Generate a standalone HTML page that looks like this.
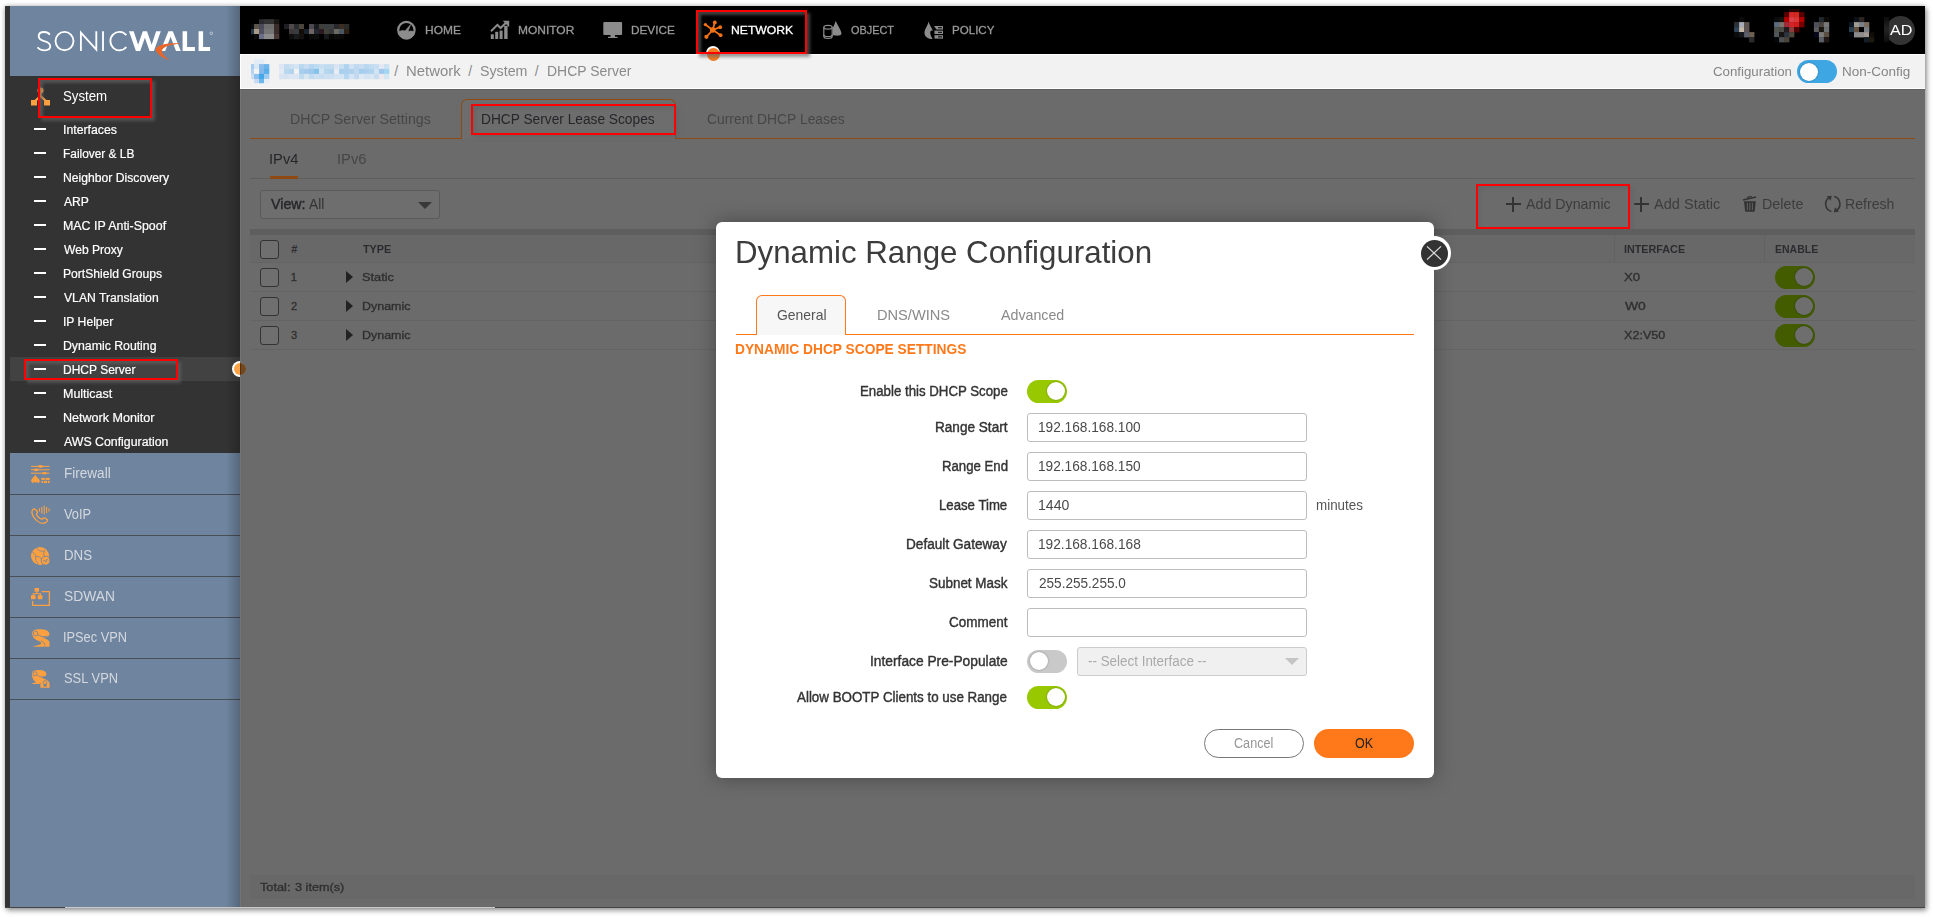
<!DOCTYPE html>
<html>
<head>
<meta charset="utf-8">
<title>DHCP Server</title>
<style>
*{box-sizing:border-box;margin:0;padding:0}
html,body{width:1934px;height:917px;overflow:hidden;background:#fff}
body{font-family:"Liberation Sans",sans-serif;position:relative}
.abs{position:absolute}
.t{position:absolute;white-space:nowrap;line-height:1;transform-origin:0 0}
.b{font-weight:bold}
#shot{position:absolute;left:5px;top:6px;width:1920px;height:902px;box-shadow:0 0 5px rgba(0,0,0,.3),2px 3px 5px rgba(0,0,0,.3);background:#6b6b6b}
/* everything below uses page coordinates */
#strip{left:5px;top:6px;width:5px;height:902px;background:#333}
#logo{left:10px;top:6px;width:230px;height:70px;background:#6e849f}
#menu{left:10px;top:76px;width:230px;height:377px;background:#333}
#lower{left:10px;top:453px;width:230px;height:455px;background:#6e849f}
#sideshadow{left:226px;top:6px;width:14px;height:902px;background:linear-gradient(to right,rgba(0,0,0,0),rgba(0,0,0,.22))}
#topbar{left:240px;top:6px;width:1685px;height:48px;background:#000}
#crumb{left:240px;top:54px;width:1685px;height:35px;background:#f2f2f2;border-top:1px solid #fff;border-bottom:1px solid #fff;border-left:1px solid #fff}
#content{left:240px;top:89px;width:1685px;height:819px;background:#6b6b6b;border-top:1px solid #606060;border-left:1px solid #747474}
#panel{left:250px;top:90px;width:1665px;height:809px;background:#6b6b6b}
.redbox{position:absolute;border:2px solid #f00;box-shadow:3px 3px 3px rgba(100,100,100,.65),inset 3px 3px 3px rgba(100,100,100,.65)}
#modal{left:716px;top:222px;width:718px;height:556px;background:#fff;border-radius:6px;box-shadow:0 0 20px rgba(0,0,0,.34)}
.mi{font-size:12px;color:#fff}
.li{font-size:14.5px;color:#dfe3ea}
.nv{font-size:12px}
.bc{font-size:15px;color:#8a8a8a}
.cf{font-size:13.5px;color:#858585}
.tb{font-size:14px}
.tl{font-size:14.5px;color:#3c3c3c}
.th{font-size:11px;font-weight:bold;color:#2b2b2b}
.td{font-size:11px;color:#333}
.mt{font-size:14.5px}
.lb{font-size:13.5px;font-weight:bold;color:#3a3a3a}
.inp{left:1027px;width:280px;height:29px;border:1px solid #bdbdbd;border-radius:3px;background:#fff}
.iv{font-size:14px;color:#555}
</style>
</head>
<body>
<div id="shot"></div>
<div id="strip" class="abs"></div>
<div id="logo" class="abs"></div>
<div id="menu" class="abs"></div>
<div id="lower" class="abs"></div>
<div id="topbar" class="abs"></div>
<div id="crumb" class="abs"></div>
<div id="content" class="abs"></div>
<div id="panel" class="abs"></div>
<!--SIDEBAR-->
<svg class="abs" style="left:10px;top:6px" width="230" height="70" viewBox="10 6 230 70">
<g fill="none" stroke="#fff" stroke-width="1.85">
<path d="M49.8 34.8 C48.6 32.8 46.5 32 44 32 C40.8 32 38.7 33.7 38.7 36.3 C38.7 39.2 41 40.2 44.2 41.1 C47.8 42.1 50.3 43.3 50.3 46.3 C50.3 48.9 48 50.3 44.6 50.3 C41.6 50.3 39 49.2 37.6 47.2"/>
<ellipse cx="64.5" cy="41.1" rx="9" ry="9.2"/>
<path d="M80.9 51 V32.6 L96.3 49.6 V31.2"/>
<path d="M103 31.2 V51"/>
<path d="M126.3 35.2 A9 9.2 0 1 0 126.3 47"/>
</g>
<g fill="#fff">
<path d="M129 31.2 h4.7 l4.4 13.6 l4.7-13.6 h4.2 l4.7 13.6 l4.4-13.6 h4.7 l-6.9 19.8 h-4.3 l-4.7-13.2 l-4.7 13.2 h-4.3z"/>
<path d="M168.4 31.2 h4.4 l8 19.8 h-4.8 l-5.4-14.2 l-5.4 14.2 h-4.8z"/>
<path d="M182.6 31.2 h4.5 v15.8 h7.8 v4 h-12.3z"/>
<path d="M198.6 31.2 h4.5 v15.8 h7.0 v4 h-11.5z"/>
<circle cx="211.3" cy="33.3" r="1.3" fill="none" stroke="#fff" stroke-width=".5"/>
</g>
<path d="M180.8 43.6 C170 42.6 158.5 44.2 155.8 48.6 C154.8 52.5 161.5 58 169.5 60.2 C164.5 56.5 160.5 52.5 162.5 49.3 C164.5 46.3 172 44.6 180.8 43.6z" fill="#e8662a"/>
</svg>
<div class="abs" style="left:10px;top:357px;width:230px;height:24px;background:#424242"></div>
<svg class="abs" style="left:30px;top:86px" width="22" height="22" viewBox="0 0 22 22"><g fill="#ffa040" stroke="none"><circle cx="10.5" cy="4.5" r="3"/><rect x="1" y="14" width="6" height="5.5"/><rect x="14" y="14" width="6" height="5.5"/></g><path d="M10.5 5 V10 L4 16 M10.5 10 L17 16" stroke="#ffa040" stroke-width="2.2" fill="none"/></svg>
<div class="abs" style="left:34px;top:128px;width:12px;height:2px;background:#fff"></div>
<div class="abs" style="left:34px;top:152px;width:12px;height:2px;background:#fff"></div>
<div class="abs" style="left:34px;top:176px;width:12px;height:2px;background:#fff"></div>
<div class="abs" style="left:34px;top:200px;width:12px;height:2px;background:#fff"></div>
<div class="abs" style="left:34px;top:224px;width:12px;height:2px;background:#fff"></div>
<div class="abs" style="left:34px;top:248px;width:12px;height:2px;background:#fff"></div>
<div class="abs" style="left:34px;top:272px;width:12px;height:2px;background:#fff"></div>
<div class="abs" style="left:34px;top:296px;width:12px;height:2px;background:#fff"></div>
<div class="abs" style="left:34px;top:320px;width:12px;height:2px;background:#fff"></div>
<div class="abs" style="left:34px;top:344px;width:12px;height:2px;background:#fff"></div>
<div class="abs" style="left:34px;top:368px;width:12px;height:2px;background:#fff"></div>
<div class="abs" style="left:34px;top:392px;width:12px;height:2px;background:#fff"></div>
<div class="abs" style="left:34px;top:416px;width:12px;height:2px;background:#fff"></div>
<div class="abs" style="left:34px;top:440px;width:12px;height:2px;background:#fff"></div>
<div class="abs" style="left:10px;top:494px;width:230px;height:1.3px;background:#4a4e56"></div>
<!--ICON0-->
<div class="abs" style="left:10px;top:535px;width:230px;height:1.3px;background:#4a4e56"></div>
<!--ICON1-->
<div class="abs" style="left:10px;top:576px;width:230px;height:1.3px;background:#4a4e56"></div>
<!--ICON2-->
<div class="abs" style="left:10px;top:617px;width:230px;height:1.3px;background:#4a4e56"></div>
<!--ICON3-->
<div class="abs" style="left:10px;top:658px;width:230px;height:1.3px;background:#4a4e56"></div>
<!--ICON4-->
<div class="abs" style="left:10px;top:699px;width:230px;height:1.3px;background:#4a4e56"></div>
<!--ICON5-->
<div id="sideshadow" class="abs"></div>
<svg class="abs" style="left:28px;top:460px" width="26" height="232" viewBox="28 460 26 232">
<!-- firewall -->
<g stroke="#ffa040" stroke-width="1" fill="none"><path d="M31 466.4 H49.6 M31 469.8 H49.6 M31 473.2 H49.6"/></g>
<g fill="#ffa040"><ellipse cx="40.5" cy="466.4" rx="2.4" ry="1.3"/><ellipse cx="36.2" cy="469.8" rx="2.4" ry="1.3"/><ellipse cx="44.5" cy="473.2" rx="2.4" ry="1.3"/>
<path d="M35.3 474.6 C36 477 39.6 478.6 39.8 481 C39.9 482.4 38.6 483 37.8 483 L37 481.4 L35.6 483 L34.2 481.4 L33.2 483 C32 483 31 482 31.2 480.6 C31.5 478.4 34.5 477 35.3 474.6z"/>
<rect x="41.4" y="477.8" width="3.3" height="2.2"/><rect x="45.6" y="477.8" width="4" height="2.2"/><rect x="41.4" y="480.8" width="1.6" height="2.2"/><rect x="43.8" y="480.8" width="3.4" height="2.2"/><rect x="48" y="480.8" width="1.6" height="2.2"/></g>
<!-- voip -->
<g stroke="#ffa040" fill="none" stroke-width="1.3" stroke-linejoin="round"><path d="M33 509.6 C31.2 511 31.6 514.6 34.6 518.4 C37.8 522.4 42.2 524.2 45.4 522.6 C47.4 521.6 48 520.4 47.2 519.6 L44.8 518 C44 517.6 43.2 518 42.6 518.8 C41.8 519.6 40.8 519.4 38.8 517.6 C36.8 515.8 36 514.4 36.8 513.4 C37.6 512.6 37.6 511.8 36.8 511 L35.2 509.4 C34.6 508.8 33.8 509 33 509.6z"/></g>
<g stroke="#ffa040" stroke-width="1.1"><path d="M39.4 508.2 v3.4 M41.8 507 v6.4 M44.2 505.6 v8.6 M46.6 507 v6 M49 508.6 v2.8"/></g>
<!-- dns -->
<circle cx="40" cy="556" r="9" fill="#ffa040"/>
<g stroke="#6e849f" stroke-width=".8" fill="none"><path d="M36.5 548 C38.5 551 41.5 552 45 550.5 M32.2 552 C35 553.5 36.5 556 35.5 560.5 M35.5 556.5 C38.5 556 41 557.5 42 560 M44.5 551 C43 553.5 43.5 555.5 45.5 556.5 M36 561 C37.5 562 38 563.5 37.5 564.8"/></g>
<circle cx="45.6" cy="560.6" r="4.4" fill="#ffa040" stroke="#6e849f" stroke-width=".9"/>
<path d="M43 561 l1.4-1 l1.2 2.2 l1.4-3 l1.2 1.4" fill="none" stroke="#6e849f" stroke-width=".8"/>
<!-- sdwan -->
<g fill="#ffa040"><rect x="34.6" y="588" width="4.4" height="3.6"/><rect x="31" y="595.2" width="4.6" height="4"/><rect x="37.8" y="595.2" width="4.6" height="4"/><rect x="36.3" y="591" width="1" height="3"/><rect x="32.8" y="593.2" width="8" height="1"/><rect x="32.8" y="593.2" width="1" height="2.4"/><rect x="39.8" y="593.2" width="1" height="2.4"/></g>
<path d="M41.6 591.6 H49.4 V605.4 H32.6 V601" fill="none" stroke="#ffa040" stroke-width="1.3"/>
<!-- ipsec -->
<path d="M32.2 633 C32.4 630.6 35 629.2 39.5 629.2 C45 629.2 49.2 630.6 49.4 634 C49.5 636.6 46 637.6 41 637.8 C44.8 638.2 49.6 639.6 49.6 643 L49.4 646.8 H32.2 C34.5 646 38.4 645.4 40.8 644 C41.8 643.2 40.8 642 38.6 641 C34.4 639.4 32 636.4 32.2 633z" fill="#ffa040"/>
<g fill="none" stroke="#6e849f" stroke-width=".8"><circle cx="35.6" cy="633.6" r="2.3"/><path d="M38 635 C40.5 636.5 44 637 47.5 636.2 M40.6 641 C43 641.6 45.4 642.8 44.8 646.4"/></g>
<!-- ssl vpn -->
<path d="M32 673.2 C32.2 671 34.6 670 38.6 670 C43 670 46.2 671.2 46.4 674 C46.5 676 44 677.2 40.6 677.6 C42.6 678 44.6 678.8 45.8 680 L38.4 684 C37.8 683 36.8 682.4 35.6 681.8 C33 680.4 31.8 676.4 32 673.2z" fill="#ffa040"/>
<path d="M31.2 683.4 C34 683 37 682.2 38.6 680.8 L39.8 683.8 C37.4 684.2 33.6 684.2 31.2 683.4z" fill="#ffa040"/>
<path d="M40.4 687.8 V682.4 C41.6 680.8 43.4 679.6 45.6 679.6 C48 680.2 49.4 682 49.6 684 V687.8z" fill="#ffa040"/>
<g fill="none" stroke="#6e849f" stroke-width=".8"><circle cx="35" cy="673.8" r="2.1"/><path d="M37.4 675.4 C39.6 676.8 42.6 677.4 45 676.6"/><circle cx="45" cy="682.6" r="1.9"/></g>
<path d="M43.8 684 h2.6 l.5 2.6 h-3.6z" fill="#6e849f"/>
</svg>
<div class="redbox" style="left:38px;top:78px;width:114px;height:39.5px"></div>
<div class="redbox" style="left:24px;top:358.5px;width:153.5px;height:21.5px"></div>
<div class="abs" style="left:232px;top:360.7px;width:8px;height:16.6px;border-radius:8.3px 0 0 8.3px;background:#fff"></div>
<div class="abs" style="left:234px;top:362.9px;width:12.2px;height:12.2px;border-radius:6.1px;background:#ffa347"></div>
<div class="abs" style="left:240px;top:362.9px;width:6.2px;height:12.2px;background:rgba(0,0,0,.56);border-radius:0 6.1px 6.1px 0"></div><div class="abs" style="left:239.6px;top:362.9px;width:.8px;height:12.2px;background:rgba(0,0,0,.3)"></div>
<!--TOPNAV-->
<svg class="abs" style="left:240px;top:6px;filter:blur(.5px)" width="1685" height="82" viewBox="240 6 1685 82"><rect x="259.0" y="19.2" width="5.3" height="5.1" fill="#2a2a30"/><rect x="264.0" y="19.2" width="10.3" height="5.1" fill="#333"/><rect x="274.0" y="19.2" width="5.3" height="5.1" fill="#1a1614"/><rect x="251.0" y="24.0" width="3.3" height="5.3" fill="#05080c"/><rect x="254.0" y="24.0" width="5.3" height="5.3" fill="#5a544a"/><rect x="259.0" y="24.0" width="5.3" height="5.3" fill="#4a4a58"/><rect x="264.0" y="24.0" width="10.3" height="5.3" fill="#6e6e6e"/><rect x="274.0" y="24.0" width="5.3" height="5.3" fill="#3a2c2a"/><rect x="251.0" y="29.0" width="3.3" height="5.3" fill="#25384a"/><rect x="254.0" y="29.0" width="5.3" height="5.3" fill="#a89c88"/><rect x="259.0" y="29.0" width="5.3" height="5.3" fill="#505060"/><rect x="264.0" y="29.0" width="10.3" height="5.3" fill="#757575"/><rect x="274.0" y="29.0" width="5.3" height="5.3" fill="#3a2c2a"/><rect x="254.0" y="34.0" width="5.3" height="5.1" fill="#0c0c0a"/><rect x="259.0" y="34.0" width="5.3" height="5.1" fill="#6a6e88"/><rect x="264.0" y="34.0" width="10.3" height="5.1" fill="#8c8c8c"/><rect x="274.0" y="34.0" width="5.3" height="5.1" fill="#4a3632"/><rect x="284.0" y="24.0" width="5.3" height="5.3" fill="#1c1e22"/><rect x="289.0" y="24.0" width="5.3" height="5.3" fill="#4e4a4c"/><rect x="294.0" y="24.0" width="5.3" height="5.3" fill="#2a2c2e"/><rect x="299.0" y="24.0" width="5.3" height="5.3" fill="#4a463e"/><rect x="304.0" y="24.0" width="5.3" height="5.3" fill="#000"/><rect x="309.0" y="24.0" width="5.3" height="5.3" fill="#4e4850"/><rect x="314.0" y="24.0" width="5.3" height="5.3" fill="#181c1e"/><rect x="319.0" y="24.0" width="5.3" height="5.3" fill="#403e3a"/><rect x="324.0" y="24.0" width="5.3" height="5.3" fill="#3a4042"/><rect x="329.0" y="24.0" width="5.3" height="5.3" fill="#3c3e40"/><rect x="334.0" y="24.0" width="5.3" height="5.3" fill="#28282c"/><rect x="339.0" y="24.0" width="5.3" height="5.3" fill="#3a2e22"/><rect x="344.0" y="24.0" width="5.3" height="5.3" fill="#2a2a28"/><rect x="284.0" y="29.0" width="5.3" height="5.3" fill="#000"/><rect x="289.0" y="29.0" width="5.3" height="5.3" fill="#3e3638"/><rect x="294.0" y="29.0" width="5.3" height="5.3" fill="#363c40"/><rect x="299.0" y="29.0" width="5.3" height="5.3" fill="#140e08"/><rect x="304.0" y="29.0" width="5.3" height="5.3" fill="#18222c"/><rect x="309.0" y="29.0" width="5.3" height="5.3" fill="#6e6462"/><rect x="314.0" y="29.0" width="5.3" height="5.3" fill="#222630"/><rect x="319.0" y="29.0" width="5.3" height="5.3" fill="#2a1a20"/><rect x="324.0" y="29.0" width="5.3" height="5.3" fill="#40423a"/><rect x="329.0" y="29.0" width="5.3" height="5.3" fill="#38383a"/><rect x="334.0" y="29.0" width="5.3" height="5.3" fill="#6a6a60"/><rect x="339.0" y="29.0" width="5.3" height="5.3" fill="#4a5664"/><rect x="344.0" y="29.0" width="5.3" height="5.3" fill="#2c2014"/><rect x="284.0" y="34.0" width="5.3" height="5.3" fill="#000"/><rect x="289.0" y="34.0" width="5.3" height="5.3" fill="#0e0e0e"/><rect x="294.0" y="34.0" width="5.3" height="5.3" fill="#181a1c"/><rect x="299.0" y="34.0" width="5.3" height="5.3" fill="#14120e"/><rect x="304.0" y="34.0" width="5.3" height="5.3" fill="#000"/><rect x="309.0" y="34.0" width="5.3" height="5.3" fill="#0a0a0a"/><rect x="314.0" y="34.0" width="5.3" height="5.3" fill="#0c0c0c"/><rect x="319.0" y="34.0" width="5.3" height="5.3" fill="#000"/><rect x="324.0" y="34.0" width="5.3" height="5.3" fill="#16181a"/><rect x="329.0" y="34.0" width="5.3" height="5.3" fill="#080604"/><rect x="334.0" y="34.0" width="5.3" height="5.3" fill="#0c0c0c"/><rect x="339.0" y="34.0" width="5.3" height="5.3" fill="#0a0a0a"/><rect x="344.0" y="34.0" width="5.3" height="5.3" fill="#000"/><rect x="254.0" y="59.3" width="5.3" height="5.1" fill="#e2ecf6"/><rect x="259.0" y="59.3" width="5.3" height="5.1" fill="#e2ecf6"/><rect x="251.0" y="64.1" width="3.3" height="5.1" fill="#a8ccf0"/><rect x="254.0" y="64.1" width="5.3" height="5.1" fill="#d8e8f4"/><rect x="259.0" y="64.1" width="5.3" height="5.1" fill="#8cbcec"/><rect x="264.0" y="64.1" width="5.3" height="5.1" fill="#6cb4ec"/><rect x="251.0" y="68.9" width="3.3" height="5.3" fill="#b4d4f0"/><rect x="254.0" y="68.9" width="5.3" height="5.3" fill="#f4f4f4"/><rect x="259.0" y="68.9" width="5.3" height="5.3" fill="#86b8ea"/><rect x="264.0" y="68.9" width="5.3" height="5.3" fill="#58aee8"/><rect x="251.0" y="73.9" width="3.3" height="5.3" fill="#ccdcf2"/><rect x="254.0" y="73.9" width="5.3" height="5.3" fill="#8cc0ee"/><rect x="259.0" y="73.9" width="5.3" height="5.3" fill="#44a8e8"/><rect x="264.0" y="73.9" width="5.3" height="5.3" fill="#9ccaf0"/><rect x="254.0" y="78.9" width="5.3" height="4.3" fill="#c8daf2"/><rect x="259.0" y="78.9" width="5.3" height="4.3" fill="#6cb8ea"/><rect x="264.0" y="78.9" width="5.3" height="4.3" fill="#e8eef6"/><rect x="279.0" y="64.1" width="5.3" height="5.1" fill="#dce6f4"/><rect x="284.0" y="64.1" width="5.3" height="5.1" fill="#c4dcf0"/><rect x="289.0" y="64.1" width="5.3" height="5.1" fill="#cce0f2"/><rect x="294.0" y="64.1" width="5.3" height="5.1" fill="#d4e4f2"/><rect x="299.0" y="64.1" width="5.3" height="5.1" fill="#b8d8f0"/><rect x="304.0" y="64.1" width="5.3" height="5.1" fill="#c8dcf2"/><rect x="309.0" y="64.1" width="5.3" height="5.1" fill="#b4d6f0"/><rect x="314.0" y="64.1" width="5.3" height="5.1" fill="#bcdaf0"/><rect x="319.0" y="64.1" width="5.3" height="5.1" fill="#c8dff2"/><rect x="324.0" y="64.1" width="5.3" height="5.1" fill="#c0dcf0"/><rect x="329.0" y="64.1" width="5.3" height="5.1" fill="#c4dcf0"/><rect x="334.0" y="64.1" width="5.3" height="5.1" fill="#dce4f4"/><rect x="339.0" y="64.1" width="5.3" height="5.1" fill="#c8e0f2"/><rect x="344.0" y="64.1" width="5.3" height="5.1" fill="#b0d4f0"/><rect x="349.0" y="64.1" width="5.3" height="5.1" fill="#d0e2f4"/><rect x="354.0" y="64.1" width="5.3" height="5.1" fill="#c0d8f0"/><rect x="359.0" y="64.1" width="5.3" height="5.1" fill="#c8dcf2"/><rect x="364.0" y="64.1" width="5.3" height="5.1" fill="#b8d8f0"/><rect x="369.0" y="64.1" width="5.3" height="5.1" fill="#c0dcf0"/><rect x="374.0" y="64.1" width="5.3" height="5.1" fill="#c8def2"/><rect x="379.0" y="64.1" width="5.3" height="5.1" fill="#e4e8f4"/><rect x="384.0" y="64.1" width="5.3" height="5.1" fill="#cce2f2"/><rect x="279.0" y="68.9" width="5.3" height="5.3" fill="#e6eaf4"/><rect x="284.0" y="68.9" width="5.3" height="5.3" fill="#b8d8f0"/><rect x="289.0" y="68.9" width="5.3" height="5.3" fill="#b4d4ee"/><rect x="294.0" y="68.9" width="5.3" height="5.3" fill="#f2f2f2"/><rect x="299.0" y="68.9" width="5.3" height="5.3" fill="#a8ceee"/><rect x="304.0" y="68.9" width="5.3" height="5.3" fill="#a4caee"/><rect x="309.0" y="68.9" width="5.3" height="5.3" fill="#a0c8ec"/><rect x="314.0" y="68.9" width="5.3" height="5.3" fill="#84c4ea"/><rect x="319.0" y="68.9" width="5.3" height="5.3" fill="#d0e4f2"/><rect x="324.0" y="68.9" width="5.3" height="5.3" fill="#b4d6ee"/><rect x="329.0" y="68.9" width="5.3" height="5.3" fill="#b0d4ee"/><rect x="334.0" y="68.9" width="5.3" height="5.3" fill="#eaecf4"/><rect x="339.0" y="68.9" width="5.3" height="5.3" fill="#a8d0ee"/><rect x="344.0" y="68.9" width="5.3" height="5.3" fill="#acd0ee"/><rect x="349.0" y="68.9" width="5.3" height="5.3" fill="#b0d2ee"/><rect x="354.0" y="68.9" width="5.3" height="5.3" fill="#c0d8f0"/><rect x="359.0" y="68.9" width="5.3" height="5.3" fill="#a4ceee"/><rect x="364.0" y="68.9" width="5.3" height="5.3" fill="#acd0ee"/><rect x="369.0" y="68.9" width="5.3" height="5.3" fill="#b0d4ee"/><rect x="374.0" y="68.9" width="5.3" height="5.3" fill="#d0e4f2"/><rect x="379.0" y="68.9" width="5.3" height="5.3" fill="#a0c8ee"/><rect x="384.0" y="68.9" width="5.3" height="5.3" fill="#a4d6f0"/><rect x="279.0" y="73.9" width="5.3" height="5.3" fill="#d8e4f2"/><rect x="284.0" y="73.9" width="5.3" height="5.3" fill="#d4e2f2"/><rect x="289.0" y="73.9" width="5.3" height="5.3" fill="#dce6f2"/><rect x="294.0" y="73.9" width="5.3" height="5.3" fill="#dce6f2"/><rect x="299.0" y="73.9" width="5.3" height="5.3" fill="#c0dcf0"/><rect x="304.0" y="73.9" width="5.3" height="5.3" fill="#d8e6f2"/><rect x="309.0" y="73.9" width="5.3" height="5.3" fill="#c0dcf0"/><rect x="314.0" y="73.9" width="5.3" height="5.3" fill="#cce0f2"/><rect x="319.0" y="73.9" width="5.3" height="5.3" fill="#c8def0"/><rect x="324.0" y="73.9" width="5.3" height="5.3" fill="#cce0f2"/><rect x="329.0" y="73.9" width="5.3" height="5.3" fill="#cce0f2"/><rect x="334.0" y="73.9" width="5.3" height="5.3" fill="#d4e4f2"/><rect x="339.0" y="73.9" width="5.3" height="5.3" fill="#d4e4f2"/><rect x="344.0" y="73.9" width="5.3" height="5.3" fill="#b4d6f0"/><rect x="349.0" y="73.9" width="5.3" height="5.3" fill="#d4e4f4"/><rect x="354.0" y="73.9" width="5.3" height="5.3" fill="#c4d8f0"/><rect x="359.0" y="73.9" width="5.3" height="5.3" fill="#dce8f4"/><rect x="364.0" y="73.9" width="5.3" height="5.3" fill="#d4e4f2"/><rect x="369.0" y="73.9" width="5.3" height="5.3" fill="#d8e6f2"/><rect x="374.0" y="73.9" width="5.3" height="5.3" fill="#c8def0"/><rect x="379.0" y="73.9" width="5.3" height="5.3" fill="#ece8f0"/><rect x="384.0" y="73.9" width="5.3" height="5.3" fill="#d4e6f2"/><rect x="1739.1" y="17.1" width="5.3" height="5.3" fill="#0c0a0a"/><rect x="1734.1" y="22.1" width="5.3" height="5.3" fill="#2c3038"/><rect x="1739.1" y="22.1" width="5.3" height="5.3" fill="#a8acb8"/><rect x="1744.1" y="22.1" width="5.3" height="5.3" fill="#5c544c"/><rect x="1734.1" y="27.1" width="5.3" height="5.3" fill="#2e4258"/><rect x="1739.1" y="27.1" width="5.3" height="5.3" fill="#c4b8a8"/><rect x="1744.1" y="27.1" width="5.3" height="5.3" fill="#5c5454"/><rect x="1734.1" y="32.1" width="5.3" height="5.3" fill="#0a0c0c"/><rect x="1739.1" y="32.1" width="5.3" height="5.3" fill="#14181c"/><rect x="1744.1" y="32.1" width="5.3" height="5.3" fill="#5c606c"/><rect x="1749.1" y="32.1" width="5.3" height="5.3" fill="#6c6050"/><rect x="1749.1" y="37.1" width="5.3" height="5.3" fill="#2c2c2c"/><rect x="1789.1" y="9.0" width="5.3" height="3.4" fill="#2a0000"/><rect x="1794.1" y="9.0" width="5.3" height="3.4" fill="#2a0000"/><rect x="1784.1" y="12.1" width="5.3" height="5.3" fill="#5a0000"/><rect x="1789.1" y="12.1" width="5.3" height="5.3" fill="#d82828"/><rect x="1794.1" y="12.1" width="5.3" height="5.3" fill="#d42a20"/><rect x="1799.1" y="12.1" width="5.3" height="5.3" fill="#5a0000"/><rect x="1774.1" y="17.1" width="5.3" height="5.3" fill="#0a0c10"/><rect x="1779.1" y="17.1" width="5.3" height="5.3" fill="#14120e"/><rect x="1784.1" y="17.1" width="5.3" height="5.3" fill="#b40000"/><rect x="1789.1" y="17.1" width="5.3" height="5.3" fill="#dc4048"/><rect x="1794.1" y="17.1" width="5.3" height="5.3" fill="#dc3838"/><rect x="1799.1" y="17.1" width="5.3" height="5.3" fill="#b00000"/><rect x="1774.1" y="22.1" width="5.3" height="5.3" fill="#5c6c80"/><rect x="1779.1" y="22.1" width="5.3" height="5.3" fill="#7c746c"/><rect x="1784.1" y="22.1" width="5.3" height="5.3" fill="#a02c38"/><rect x="1789.1" y="22.1" width="5.3" height="5.3" fill="#d42428"/><rect x="1794.1" y="22.1" width="5.3" height="5.3" fill="#d41c1c"/><rect x="1799.1" y="22.1" width="5.3" height="5.3" fill="#780000"/><rect x="1774.1" y="27.1" width="5.3" height="5.3" fill="#50544e"/><rect x="1779.1" y="27.1" width="5.3" height="5.3" fill="#4c4c48"/><rect x="1784.1" y="27.1" width="5.3" height="5.3" fill="#201c20"/><rect x="1789.1" y="27.1" width="5.3" height="5.3" fill="#903c3c"/><rect x="1794.1" y="27.1" width="5.3" height="5.3" fill="#500000"/><rect x="1774.1" y="32.1" width="5.3" height="5.3" fill="#50585c"/><rect x="1779.1" y="32.1" width="5.3" height="5.3" fill="#181210"/><rect x="1784.1" y="32.1" width="5.3" height="5.3" fill="#2c3440"/><rect x="1789.1" y="32.1" width="5.3" height="5.3" fill="#4c483c"/><rect x="1774.1" y="37.1" width="5.3" height="5.3" fill="#040608"/><rect x="1779.1" y="37.1" width="5.3" height="5.3" fill="#4c5054"/><rect x="1784.1" y="37.1" width="5.3" height="5.3" fill="#4a443c"/><rect x="1818.9" y="17.1" width="5.3" height="5.3" fill="#20282c"/><rect x="1823.9" y="17.1" width="5.3" height="5.3" fill="#0c0a06"/><rect x="1813.9" y="22.1" width="5.3" height="5.3" fill="#4c505c"/><rect x="1818.9" y="22.1" width="5.3" height="5.3" fill="#4c4440"/><rect x="1823.9" y="22.1" width="5.3" height="5.3" fill="#787878"/><rect x="1813.9" y="27.1" width="5.3" height="5.3" fill="#5c5c60"/><rect x="1818.9" y="27.1" width="5.3" height="5.3" fill="#181410"/><rect x="1823.9" y="27.1" width="5.3" height="5.3" fill="#6c7070"/><rect x="1813.9" y="32.1" width="5.3" height="5.3" fill="#06061c"/><rect x="1818.9" y="32.1" width="5.3" height="5.3" fill="#7c7c78"/><rect x="1823.9" y="32.1" width="5.3" height="5.3" fill="#5c5044"/><rect x="1818.9" y="37.1" width="5.3" height="5.3" fill="#5c6068"/><rect x="1823.9" y="37.1" width="5.3" height="5.3" fill="#201814"/><rect x="1854.0" y="17.1" width="5.3" height="5.3" fill="#0c1018"/><rect x="1859.0" y="17.1" width="5.3" height="5.3" fill="#2c2420"/><rect x="1849.0" y="22.1" width="5.3" height="5.3" fill="#0c1824"/><rect x="1854.0" y="22.1" width="5.3" height="5.3" fill="#a09c94"/><rect x="1859.0" y="22.1" width="5.3" height="5.3" fill="#7c8088"/><rect x="1864.0" y="22.1" width="5.3" height="5.3" fill="#7c6c5c"/><rect x="1849.0" y="27.1" width="5.3" height="5.3" fill="#284050"/><rect x="1854.0" y="27.1" width="5.3" height="5.3" fill="#64503c"/><rect x="1859.0" y="27.1" width="5.3" height="5.3" fill="#000"/><rect x="1864.0" y="27.1" width="5.3" height="5.3" fill="#7c8084"/><rect x="1849.0" y="32.1" width="5.3" height="5.3" fill="#04080c"/><rect x="1854.0" y="32.1" width="5.3" height="5.3" fill="#8c8c8c"/><rect x="1859.0" y="32.1" width="5.3" height="5.3" fill="#908c8c"/><rect x="1864.0" y="32.1" width="5.3" height="5.3" fill="#a09894"/><rect x="1869.0" y="32.1" width="5.3" height="5.3" fill="#100c08"/><rect x="1864.0" y="37.1" width="5.3" height="5.3" fill="#141c24"/><rect x="1869.0" y="37.1" width="5.3" height="5.3" fill="#1c1810"/></svg>
<svg class="abs" style="left:390px;top:12px" width="620" height="36" viewBox="390 12 620 36">
<!-- home gauge -->
<circle cx="406.4" cy="30" r="8.2" fill="none" stroke="#8c8c8c" stroke-width="2.2"/>
<path d="M398.2 32.2 C400.4 30.6 402.8 30 405 31 L410.6 24.6 L408 31.6 C410.2 30.6 412.8 31 414.6 32.4 A8.3 8.3 0 0 1 398.2 32.2z" fill="#8c8c8c" stroke="#8c8c8c" stroke-width=".6"/>
<!-- monitor chart -->
<g fill="#8c8c8c"><rect x="490.8" y="34.3" width="3" height="4.7"/><rect x="495.2" y="31.8" width="3" height="7.2"/><rect x="499.6" y="30.6" width="3" height="8.4"/><rect x="504.2" y="25.8" width="3.4" height="13.2"/>
<path d="M502.8 20.8 h6.4 v6.4z"/></g>
<path d="M491 31.2 L497.4 24.8 L500.6 28 L507 21.8" fill="none" stroke="#8c8c8c" stroke-width="2"/>
<!-- device -->
<g fill="#8c8c8c"><rect x="603.3" y="22" width="18.8" height="13" rx="1"/><rect x="610.5" y="35" width="4.5" height="2"/><rect x="608" y="36.8" width="9.5" height="1.2"/></g>
<!-- network -->
<g stroke="#f47216" stroke-width="1.8" fill="#f47216"><path d="M712.7 30 L714.8 22.6 M712.7 30 L720 27.2 M712.7 30 L720.4 35 M712.7 30 L706.6 36.6 M712.7 30 L705.6 24.8" fill="none"/>
<circle cx="712.7" cy="30" r="2.8" stroke="none"/><circle cx="714.8" cy="22.4" r="1.9" stroke="none"/><circle cx="720.2" cy="27.2" r="1.9" stroke="none"/><circle cx="720.6" cy="35.2" r="1.9" stroke="none"/><circle cx="706.4" cy="36.8" r="2.1" stroke="none"/><circle cx="705.4" cy="24.6" r="1.7" stroke="none"/></g>
<!-- object -->
<path d="M835.7 21 C837.5 25 841.5 31 841.5 33.5 C841.5 35.2 838.5 36 835.5 35.6 L833 35.2 V27.5 C834 25.5 835 23 835.7 21z" fill="#8c8c8c"/>
<g fill="none" stroke="#8c8c8c" stroke-width="1.2"><ellipse cx="828" cy="27.2" rx="4.2" ry="1.9"/><path d="M823.8 27.2 V36.6 A4.2 1.9 0 0 0 832.2 36.6 V27.2"/><path d="M823.8 34.8 A4.2 1.9 0 0 0 832.2 34.8"/></g>
<!-- policy -->
<path d="M928.6 21.6 C929.4 25 931.6 27.5 933 31 C930.8 29.6 930 31.5 930.4 34 C930.8 36 931.8 37.5 932.6 39 C929 39.2 925.4 37.4 924.6 34 C923.8 30 927.6 26.4 928.6 21.6z" fill="#8c8c8c"/>
<g fill="#8c8c8c"><path d="M934 26 h9 v3.4 h-6.5z"/><rect x="934.5" y="30.6" width="8.5" height="3.4"/><rect x="934.5" y="35.2" width="8.5" height="3.4"/></g>
<g fill="#000"><rect x="938" y="27.2" width="4" height="1"/><rect x="938" y="31.8" width="4" height="1"/><rect x="938" y="36.4" width="4" height="1"/></g>
</svg>
<div class="abs" style="left:1886px;top:15.7px;width:29px;height:29px;border-radius:15px;background:#333"></div><div class="abs" style="left:1884.2px;top:17px;width:5px;height:25px;background:linear-gradient(#0c0c0c,#242424,#0c0c0c)"></div>
<div class="abs" style="left:1797px;top:60px;width:40px;height:23px;border-radius:12px;background:#3ea6e3"></div>
<div class="abs" style="left:1799.5px;top:62.5px;width:18px;height:18px;border-radius:9px;background:#fff;box-shadow:0 0 2px rgba(0,0,0,.35)"></div>



<!--CONTENT-->
<div class="abs" style="left:250px;top:138px;width:1665px;height:1px;background:#8f4a12"></div>
<div class="abs" style="left:461px;top:99px;width:215px;height:40px;border:1px solid #8f4a12;border-bottom:none;border-radius:6px 6px 0 0;background:#6d6d6d"></div>
<div class="redbox" style="left:471px;top:104px;width:204.5px;height:31px"></div>
<div class="abs" style="left:250px;top:178px;width:1665px;height:1px;background:#5e5e5e"></div>
<div class="abs" style="left:270px;top:176px;width:28px;height:3px;background:#8f4a12"></div>
<div class="abs" style="left:260px;top:190px;width:180px;height:29px;border:1px solid #5a5a5a;border-radius:3px;background:#6e6e6e"></div>
<div class="abs" style="left:417.8px;top:201.6px;width:0;height:0;border-left:7px solid transparent;border-right:7px solid transparent;border-top:7.2px solid #383838"></div>
<div class="abs" style="left:1505.5px;top:203.1px;width:15.0px;height:1.8px;background:#333"></div><div class="abs" style="left:1512.1px;top:196.5px;width:1.8px;height:15.0px;background:#333"></div>
<div class="abs" style="left:1633.5px;top:203.1px;width:15.0px;height:1.8px;background:#333"></div><div class="abs" style="left:1640.1px;top:196.5px;width:1.8px;height:15.0px;background:#333"></div>
<svg class="abs" style="left:1740px;top:194px" width="110" height="22" viewBox="1740 194 110 22">
<g fill="#333"><path d="M1744 201.2 h11.8 l-1.2 10.6 h-9.4z"/><path d="M1742.8 199.2 L1756 196.3 L1756.3 197.8 L1743.1 200.7z"/><path d="M1746.6 198 C1747.6 196.2 1750.2 195.4 1752.2 196.6 L1751.4 197.6 C1750 196.9 1748.6 197.4 1747.8 198.6z"/></g>
<g stroke="#666" stroke-width=".9"><path d="M1747.4 202.8 v7.4 M1749.9 202.8 v7.4 M1752.4 202.8 v7.4"/></g>
<g fill="none" stroke="#353535" stroke-width="1.6"><path d="M1829.6 197.4 A7.6 7.6 0 0 0 1831.4 211.4"/><path d="M1834.2 196.6 A7.6 7.6 0 0 1 1836 210.6"/></g>
<g fill="#353535"><path d="M1826.6 196.2 l5.2 -.4 l-1.2 5z"/><path d="M1839 211.8 l-5.2 .4 l1.2-5z"/></g>
</svg>
<div class="redbox" style="left:1476px;top:184px;width:154px;height:44.5px"></div>
<div class="abs" style="left:250px;top:229px;width:1665px;height:6px;background:#5e5e5e"></div>
<div class="abs" style="left:250px;top:235px;width:1665px;height:27px;background:#686868"></div>
<div class="abs" style="left:250px;top:262px;width:1665px;height:1px;background:#646464"></div>
<div class="abs" style="left:250px;top:291px;width:1665px;height:1px;background:#646464"></div>
<div class="abs" style="left:250px;top:320px;width:1665px;height:1px;background:#646464"></div>
<div class="abs" style="left:250px;top:349px;width:1665px;height:1px;background:#646464"></div>
<div class="abs" style="left:1614px;top:235px;width:1px;height:27px;background:#626262"></div>
<div class="abs" style="left:1764px;top:235px;width:1px;height:27px;background:#626262"></div>
<div class="abs" style="left:260px;top:239.5px;width:19px;height:19px;border:1.5px solid #333;border-radius:3px;background:#6f6f6f"></div>
<div class="abs" style="left:260px;top:267.5px;width:19px;height:19px;border:1.5px solid #333;border-radius:3px;background:#6f6f6f"></div>
<div class="abs" style="left:346px;top:270.5px;width:0;height:0;border-top:6.5px solid transparent;border-bottom:6.5px solid transparent;border-left:7px solid #222"></div>
<div class="abs" style="left:1775px;top:265.5px;width:40px;height:23px;border-radius:12px;background:#435c00"></div>
<div class="abs" style="left:1794.5px;top:268px;width:18px;height:18px;border-radius:9px;background:#6e6e6e;box-shadow:0 0 2px rgba(0,0,0,.4)"></div>
<div class="abs" style="left:260px;top:296.5px;width:19px;height:19px;border:1.5px solid #333;border-radius:3px;background:#6f6f6f"></div>
<div class="abs" style="left:346px;top:299.5px;width:0;height:0;border-top:6.5px solid transparent;border-bottom:6.5px solid transparent;border-left:7px solid #222"></div>
<div class="abs" style="left:1775px;top:294.5px;width:40px;height:23px;border-radius:12px;background:#435c00"></div>
<div class="abs" style="left:1794.5px;top:297px;width:18px;height:18px;border-radius:9px;background:#6e6e6e;box-shadow:0 0 2px rgba(0,0,0,.4)"></div>
<div class="abs" style="left:260px;top:325.5px;width:19px;height:19px;border:1.5px solid #333;border-radius:3px;background:#6f6f6f"></div>
<div class="abs" style="left:346px;top:328.5px;width:0;height:0;border-top:6.5px solid transparent;border-bottom:6.5px solid transparent;border-left:7px solid #222"></div>
<div class="abs" style="left:1775px;top:323.5px;width:40px;height:23px;border-radius:12px;background:#435c00"></div>
<div class="abs" style="left:1794.5px;top:326px;width:18px;height:18px;border-radius:9px;background:#6e6e6e;box-shadow:0 0 2px rgba(0,0,0,.4)"></div>
<div class="abs" style="left:250px;top:875px;width:1665px;height:24px;background:#686868"></div>
<div class="abs" style="left:5px;top:906.5px;width:1920px;height:1.5px;background:#444"></div>
<div class="abs" style="left:65px;top:906.5px;width:430px;height:1.5px;background:#c8c8c8"></div>
<div id="modal" class="abs"></div>
<!--MODAL-->
<div class="abs" style="left:1417.4px;top:236.4px;width:34px;height:34px;border-radius:17px;background:#fff"></div>
<div class="abs" style="left:1420.9px;top:239.9px;width:27px;height:27px;border-radius:14px;background:#333"></div>
<svg class="abs" style="left:1421.4px;top:240.4px" width="26" height="26" viewBox="0 0 26 26"><path d="M6 6.4 L20 19.6 M20 6.4 L6 19.6" stroke="#d8d8d8" stroke-width="1.3"/></svg>
<div class="abs" style="left:736px;top:333.5px;width:678px;height:1.5px;background:#ff791a"></div>
<div class="abs" style="left:756px;top:295px;width:90px;height:40px;border:1px solid #ff791a;border-bottom:none;border-radius:6px 6px 0 0;background:#f7f7f7"></div>
<div class="abs" style="left:1027px;top:379.5px;width:40px;height:23px;border-radius:12px;background:#98c800"></div>
<div class="abs" style="left:1046.5px;top:382px;width:18px;height:18px;border-radius:9px;background:#fff;box-shadow:0 0 2px rgba(0,0,0,.35)"></div>
<div class="abs inp" style="top:413px"></div>
<div class="abs inp" style="top:452px"></div>
<div class="abs inp" style="top:491px"></div>
<div class="abs inp" style="top:530px"></div>
<div class="abs inp" style="top:569px"></div>
<div class="abs inp" style="top:608px"></div>
<div class="abs" style="left:1027px;top:649.5px;width:40px;height:23px;border-radius:12px;background:#c9c9c9"></div>
<div class="abs" style="left:1029.5px;top:652px;width:18px;height:18px;border-radius:9px;background:#fff;box-shadow:0 0 2px rgba(0,0,0,.35)"></div>
<div class="abs" style="left:1027px;top:685.5px;width:40px;height:23px;border-radius:12px;background:#98c800"></div>
<div class="abs" style="left:1046.5px;top:688px;width:18px;height:18px;border-radius:9px;background:#fff;box-shadow:0 0 2px rgba(0,0,0,.35)"></div>
<div class="abs" style="left:1077px;top:647px;width:230px;height:29px;border:1px solid #ccc;border-radius:3px;background:#f0f0f0"></div>
<div class="abs" style="left:1285px;top:658px;width:0;height:0;border-left:7px solid transparent;border-right:7px solid transparent;border-top:7px solid #c4c4c4"></div>
<div class="abs" style="left:1204px;top:729px;width:100px;height:29px;border:1px solid #777;border-radius:15px;background:#fff"></div>
<div class="abs" style="left:1314px;top:729px;width:100px;height:29px;border-radius:15px;background:#ff791a"></div>
<div class="abs" style="left:705.8px;top:45.7px;width:14.6px;height:14.6px;border-radius:8px;background:#fff"></div>
<div class="abs" style="left:706.5px;top:48px;width:13px;height:12.6px;border-radius:7px;background:#f47b20"></div>
<div class="redbox" style="left:696px;top:9.5px;width:111px;height:44.5px"></div>
<div class="t" style="left:63.41px;top:89px;font-size:14px;color:#fff;transform:scaleX(0.9459)">System</div>
<div class="t" style="left:63.13px;top:124px;font-size:12px;color:#fff;transform:scaleX(1.0240);-webkit-text-stroke:.2px #fff">Interfaces</div>
<div class="t" style="left:63.44px;top:148px;font-size:12px;color:#fff;transform:scaleX(0.9914);-webkit-text-stroke:.2px #fff">Failover &amp; LB</div>
<div class="t" style="left:63.42px;top:172px;font-size:12px;color:#fff;transform:scaleX(1.0139);-webkit-text-stroke:.2px #fff">Neighbor Discovery</div>
<div class="t" style="left:64.08px;top:196px;font-size:12px;color:#fff;transform:scaleX(1.0075);-webkit-text-stroke:.2px #fff">ARP</div>
<div class="t" style="left:63.40px;top:220px;font-size:12px;color:#fff;transform:scaleX(1.0326);-webkit-text-stroke:.2px #fff">MAC IP Anti-Spoof</div>
<div class="t" style="left:64.12px;top:244px;font-size:12px;color:#fff;transform:scaleX(1.0068);-webkit-text-stroke:.2px #fff">Web Proxy</div>
<div class="t" style="left:63.42px;top:268px;font-size:12px;color:#fff;transform:scaleX(1.0094);-webkit-text-stroke:.2px #fff">PortShield Groups</div>
<div class="t" style="left:64.07px;top:292px;font-size:12px;color:#fff;transform:scaleX(1.0135);-webkit-text-stroke:.2px #fff">VLAN Translation</div>
<div class="t" style="left:63.15px;top:316px;font-size:12px;color:#fff;transform:scaleX(1.0112);-webkit-text-stroke:.2px #fff">IP Helper</div>
<div class="t" style="left:63.41px;top:340px;font-size:12px;color:#fff;transform:scaleX(1.0234);-webkit-text-stroke:.2px #fff">Dynamic Routing</div>
<div class="t" style="left:63.43px;top:364px;font-size:12px;color:#fff;transform:scaleX(1.0004);-webkit-text-stroke:.2px #fff">DHCP Server</div>
<div class="t" style="left:63.40px;top:388px;font-size:12px;color:#fff;transform:scaleX(1.0398);-webkit-text-stroke:.2px #fff">Multicast</div>
<div class="t" style="left:63.39px;top:412px;font-size:12px;color:#fff;transform:scaleX(1.0469);-webkit-text-stroke:.2px #fff">Network Monitor</div>
<div class="t" style="left:64.07px;top:436px;font-size:12px;color:#fff;transform:scaleX(1.0276);-webkit-text-stroke:.2px #fff">AWS Configuration</div>
<div class="t" style="left:63.50px;top:466px;font-size:14px;color:#d4d8de;transform:scaleX(0.9674)">Firewall</div>
<div class="t" style="left:64.40px;top:507px;font-size:14px;color:#d4d8de;transform:scaleX(0.9165)">VoIP</div>
<div class="t" style="left:63.52px;top:548px;font-size:14px;color:#d4d8de;transform:scaleX(0.9490)">DNS</div>
<div class="t" style="left:63.77px;top:589px;font-size:14px;color:#d4d8de;transform:scaleX(0.9883)">SDWAN</div>
<div class="t" style="left:63.45px;top:630px;font-size:14px;color:#d4d8de;transform:scaleX(0.9130)">IPSec VPN</div>
<div class="t" style="left:63.83px;top:671px;font-size:14px;color:#d4d8de;transform:scaleX(0.9228)">SSL VPN</div>
<div class="t" style="left:424.84px;top:25px;font-size:11.5px;color:#999;transform:scaleX(1.0394);-webkit-text-stroke:.3px #999">HOME</div>
<div class="t" style="left:517.84px;top:25px;font-size:11.5px;color:#999;transform:scaleX(1.0413);-webkit-text-stroke:.3px #999">MONITOR</div>
<div class="t" style="left:630.65px;top:25px;font-size:11.5px;color:#999;transform:scaleX(1.0218);-webkit-text-stroke:.3px #999">DEVICE</div>
<div class="t" style="left:731.32px;top:25px;font-size:11.5px;color:#fff;transform:scaleX(1.0575);-webkit-text-stroke:.3px #fff">NETWORK</div>
<div class="t" style="left:850.88px;top:25px;font-size:11.5px;color:#999;transform:scaleX(0.9462);-webkit-text-stroke:.3px #999">OBJECT</div>
<div class="t" style="left:951.87px;top:25px;font-size:11.5px;color:#999;transform:scaleX(1.0050);-webkit-text-stroke:.3px #999">POLICY</div>
<div class="t" style="left:1889.76px;top:23px;font-size:14.5px;color:#fff;transform:scaleX(1.1104)">AD</div>
<div class="t" style="left:394.33px;top:64px;font-size:14px;color:#8a8a8a;transform:scaleX(1.0000)">/</div>
<div class="t" style="left:406.29px;top:64px;font-size:14px;color:#8a8a8a;transform:scaleX(1.0654)">Network</div>
<div class="t" style="left:468.33px;top:64px;font-size:14px;color:#8a8a8a;transform:scaleX(1.0000)">/</div>
<div class="t" style="left:480.35px;top:64px;font-size:14px;color:#8a8a8a;transform:scaleX(1.0169)">System</div>
<div class="t" style="left:534.83px;top:64px;font-size:14px;color:#8a8a8a;transform:scaleX(1.0000)">/</div>
<div class="t" style="left:546.57px;top:64px;font-size:14px;color:#8a8a8a;transform:scaleX(0.9982)">DHCP Server</div>
<div class="t" style="left:1713.25px;top:65px;font-size:13px;color:#858585;transform:scaleX(1.0210)">Configuration</div>
<div class="t" style="left:1841.66px;top:65px;font-size:13px;color:#858585;transform:scaleX(1.0385)">Non-Config</div>
<div class="t" style="left:289.85px;top:112px;font-size:14px;color:#464646;transform:scaleX(1.0125)">DHCP Server Settings</div>
<div class="t" style="left:481.29px;top:112px;font-size:14px;color:#26262a;transform:scaleX(0.9800)">DHCP Server Lease Scopes</div>
<div class="t" style="left:706.50px;top:112px;font-size:14px;color:#464646;transform:scaleX(0.9898)">Current DHCP Leases</div>
<div class="t" style="left:268.57px;top:152px;font-size:14px;color:#26262a;transform:scaleX(1.0515)">IPv4</div>
<div class="t" style="left:336.97px;top:152px;font-size:14px;color:#464646;transform:scaleX(1.0502)">IPv6</div>
<div class="t" style="left:270.78px;top:197px;font-size:14px;color:#26262a;transform:scaleX(1.0170);-webkit-text-stroke:.4px #26262a">View:</div>
<div class="t" style="left:308.68px;top:197px;font-size:14px;color:#333;transform:scaleX(0.9800)">All</div>
<div class="t" style="left:1526.39px;top:197px;font-size:14.5px;color:#3c3c3c;transform:scaleX(0.9819)">Add Dynamic</div>
<div class="t" style="left:1653.78px;top:197px;font-size:14.5px;color:#3c3c3c;transform:scaleX(1.0032)">Add Static</div>
<div class="t" style="left:1761.56px;top:197px;font-size:14.5px;color:#3c3c3c;transform:scaleX(0.9891)">Delete</div>
<div class="t" style="left:1844.87px;top:197px;font-size:14.5px;color:#3c3c3c;transform:scaleX(0.9740)">Refresh</div>
<div class="t" style="left:291.14px;top:244px;font-size:11px;color:#2c2c30;transform:scaleX(1.0000);font-weight:bold">#</div>
<div class="t" style="left:363.10px;top:244px;font-size:11px;color:#2c2c30;transform:scaleX(0.9841);font-weight:bold">TYPE</div>
<div class="t" style="left:1624.32px;top:244px;font-size:11px;color:#2c2c30;transform:scaleX(0.9797);font-weight:bold">INTERFACE</div>
<div class="t" style="left:1775.04px;top:244px;font-size:11px;color:#2c2c30;transform:scaleX(0.9540);font-weight:bold">ENABLE</div>
<div class="t" style="left:290.77px;top:272px;font-size:11px;color:#303030;transform:scaleX(1.0000);-webkit-text-stroke:.35px #303030">1</div>
<div class="t" style="left:362.39px;top:272px;font-size:11px;color:#303030;transform:scaleX(1.1622);-webkit-text-stroke:.35px #303030">Static</div>
<div class="t" style="left:1624.32px;top:272px;font-size:11px;color:#303030;transform:scaleX(1.1943);-webkit-text-stroke:.35px #303030">X0</div>
<div class="t" style="left:291.06px;top:301px;font-size:11px;color:#303030;transform:scaleX(1.0000);-webkit-text-stroke:.35px #303030">2</div>
<div class="t" style="left:362.29px;top:301px;font-size:11px;color:#303030;transform:scaleX(1.1339);-webkit-text-stroke:.35px #303030">Dynamic</div>
<div class="t" style="left:1624.72px;top:301px;font-size:11px;color:#303030;transform:scaleX(1.2615);-webkit-text-stroke:.35px #303030">W0</div>
<div class="t" style="left:290.99px;top:330px;font-size:11px;color:#303030;transform:scaleX(1.0000);-webkit-text-stroke:.35px #303030">3</div>
<div class="t" style="left:362.29px;top:330px;font-size:11px;color:#303030;transform:scaleX(1.1339);-webkit-text-stroke:.35px #303030">Dynamic</div>
<div class="t" style="left:1624.35px;top:330px;font-size:11px;color:#303030;transform:scaleX(1.1459);-webkit-text-stroke:.35px #303030">X2:V50</div>
<div class="t" style="left:259.52px;top:882px;font-size:11px;color:#303030;transform:scaleX(1.1585);-webkit-text-stroke:.35px #303030">Total:</div>
<div class="t" style="left:295.29px;top:882px;font-size:11px;color:#303030;transform:scaleX(1.1526);-webkit-text-stroke:.35px #303030">3 item(s)</div>
<div class="t" style="left:734.69px;top:238px;font-size:30.7px;color:#3c3c3c;transform:scaleX(1.0187)">Dynamic Range Configuration</div>
<div class="t" style="left:776.50px;top:308px;font-size:14.5px;color:#555;transform:scaleX(0.9612)">General</div>
<div class="t" style="left:876.53px;top:308px;font-size:14.5px;color:#8a8a8a;transform:scaleX(1.0084)">DNS/WINS</div>
<div class="t" style="left:1001.49px;top:308px;font-size:14.5px;color:#8a8a8a;transform:scaleX(0.9804)">Advanced</div>
<div class="t" style="left:735.19px;top:342px;font-size:14px;color:#ff791a;transform:scaleX(0.9826);font-weight:bold">DYNAMIC DHCP SCOPE SETTINGS</div>
<div class="t" style="left:859.73px;top:384px;font-size:14px;color:#333;transform:scaleX(0.9468);-webkit-text-stroke:.4px #333">Enable this DHCP Scope</div>
<div class="t" style="left:934.60px;top:420px;font-size:14px;color:#333;transform:scaleX(0.9703);-webkit-text-stroke:.4px #333">Range Start</div>
<div class="t" style="left:941.73px;top:459px;font-size:14px;color:#333;transform:scaleX(0.9419);-webkit-text-stroke:.4px #333">Range End</div>
<div class="t" style="left:939.33px;top:498px;font-size:14px;color:#333;transform:scaleX(0.9425);-webkit-text-stroke:.4px #333">Lease Time</div>
<div class="t" style="left:906.30px;top:537px;font-size:14px;color:#333;transform:scaleX(0.9734);-webkit-text-stroke:.4px #333">Default Gateway</div>
<div class="t" style="left:928.70px;top:576px;font-size:14px;color:#333;transform:scaleX(0.9600);-webkit-text-stroke:.4px #333">Subnet Mask</div>
<div class="t" style="left:948.62px;top:615px;font-size:14px;color:#333;transform:scaleX(0.9632);-webkit-text-stroke:.4px #333">Comment</div>
<div class="t" style="left:869.76px;top:654px;font-size:14px;color:#333;transform:scaleX(0.9835);-webkit-text-stroke:.4px #333">Interface Pre-Populate</div>
<div class="t" style="left:797.49px;top:690px;font-size:14px;color:#333;transform:scaleX(0.9543);-webkit-text-stroke:.4px #333">Allow BOOTP Clients to use Range</div>
<div class="t" style="left:1038.32px;top:420px;font-size:14px;color:#4a4a4a;transform:scaleX(0.9767)">192.168.168.100</div>
<div class="t" style="left:1038.32px;top:459px;font-size:14px;color:#4a4a4a;transform:scaleX(0.9767)">192.168.168.150</div>
<div class="t" style="left:1038.29px;top:498px;font-size:14px;color:#4a4a4a;transform:scaleX(1.0063)">1440</div>
<div class="t" style="left:1038.32px;top:537px;font-size:14px;color:#4a4a4a;transform:scaleX(0.9777)">192.168.168.168</div>
<div class="t" style="left:1038.55px;top:576px;font-size:14px;color:#4a4a4a;transform:scaleX(0.9695)">255.255.255.0</div>
<div class="t" style="left:1316.48px;top:498px;font-size:14px;color:#555;transform:scaleX(0.9569)">minutes</div>
<div class="t" style="left:1088.32px;top:654px;font-size:14px;color:#aaa;transform:scaleX(0.9583)">-- Select Interface --</div>
<div class="t" style="left:1234.46px;top:736px;font-size:14px;color:#969696;transform:scaleX(0.9025)">Cancel</div>
<div class="t" style="left:1354.72px;top:736px;font-size:14px;color:#222;transform:scaleX(0.8937)">OK</div>
</body>
</html>
